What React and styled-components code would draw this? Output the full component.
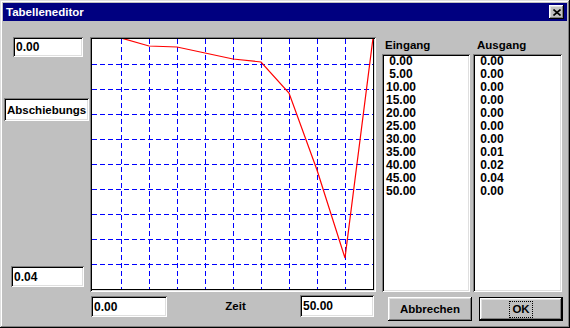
import React from "react";
import styled, { createGlobalStyle } from "styled-components";

const GlobalStyle = createGlobalStyle`
  html, body { margin: 0; padding: 0; background: #c0c0c0; }
  body { font-family: "Liberation Sans", Arial, sans-serif; }
  * { box-sizing: border-box; }
`;

const sunken = `
  box-shadow: inset 1px 1px #808080, inset -1px -1px #ffffff,
    inset 2px 2px #000000, inset -2px -2px #dfdfdf;
`;

const Window = styled.div`
  width: 570px;
  height: 328px;
  padding: 3px;
  background: #c0c0c0;
  display: flex;
  flex-direction: column;
  box-shadow: inset -1px -1px #000000, inset 1px 1px #dfdfdf,
    inset -2px -2px #808080, inset 2px 2px #ffffff;
  font-family: "Liberation Sans", Arial, sans-serif;
  color: #000;
  overflow: hidden;
`;

const TitleBar = styled.div`
  height: 18px;
  background: #000080;
  display: flex;
  align-items: center;
  justify-content: space-between;
  padding: 0 3px 0 3px;
`;

const TitleText = styled.span`
  color: #ffffff;
  font-weight: bold;
  font-size: 11.5px;
  line-height: 14px;
`;

const CloseButton = styled.div`
  width: 15px;
  height: 14px;
  background: #c0c0c0;
  display: flex;
  align-items: center;
  justify-content: center;
  box-shadow: inset -1px -1px #000000, inset 1px 1px #ffffff,
    inset -2px -2px #808080, inset 2px 2px #dfdfdf;
`;

const Body = styled.div`
  flex: 1;
  display: flex;
`;

const LeftPanel = styled.div`
  width: 87px;
  display: flex;
  flex-direction: column;
`;

const Field = styled.div`
  width: ${(p) => p.$w}px;
  height: ${(p) => p.$h}px;
  margin: ${(p) => p.$m || "0"};
  background: #ffffff;
  ${sunken}
  display: flex;
  align-items: center;
  padding: 0 3px;
  font-weight: bold;
  font-size: ${(p) => p.$fs || 12}px;
  line-height: 14px;
  white-space: pre;
  overflow: hidden;
`;

const CenterPanel = styled.div`
  width: 286px;
  display: flex;
  flex-direction: column;
`;

const PlotFrame = styled.div`
  margin-top: 16px;
  width: 286px;
  height: 255px;
  padding: 2px;
  background: #ffffff;
  ${sunken}
`;

const ChartSvg = styled.svg`
  display: block;
`;

const BottomRow = styled.div`
  margin-top: 3px;
  height: 22px;
  display: flex;
  align-items: flex-end;
  justify-content: space-between;
`;

const AxisLabel = styled.span`
  font-weight: bold;
  font-size: 11.5px;
  line-height: 14px;
  align-self: center;
  margin-left: 4px;
`;

const RightPanel = styled.div`
  flex: 1;
  padding-left: 6px;
  display: flex;
  flex-direction: column;
`;

const ListsRow = styled.div`
  display: flex;
  gap: 3px;
`;

const ListColumn = styled.div`
  width: ${(p) => p.$w}px;
  display: flex;
  flex-direction: column;
`;

const ColumnLabel = styled.div`
  height: 33px;
  padding-top: 17px;
  padding-left: ${(p) => p.$indent}px;
  font-weight: bold;
  font-size: 11.5px;
  line-height: 14px;
`;

const ListBox = styled.div`
  height: 238px;
  background: #ffffff;
  ${sunken}
  padding: 1px 2px 2px 4px;
`;

const ListItem = styled.div`
  font-weight: bold;
  font-size: 12px;
  line-height: 13px;
  height: 13px;
  white-space: pre;
`;

const ButtonRow = styled.div`
  margin-top: 5px;
  margin-left: 6px;
  display: flex;
  gap: 7px;
`;

const Button = styled.div`
  width: 84px;
  height: 24px;
  display: flex;
  align-items: center;
  justify-content: center;
  font-weight: bold;
  font-size: 11.5px;
  line-height: 13px;
  background: #c0c0c0;
  box-shadow: ${(p) =>
    p.$default
      ? "inset 0 0 0 1px #000000, inset -2px -2px #000000, inset 2px 2px #ffffff, inset -3px -3px #808080, inset 3px 3px #dfdfdf"
      : "inset -1px -1px #000000, inset 1px 1px #ffffff, inset -2px -2px #808080, inset 2px 2px #dfdfdf"};
`;

const FocusRect = styled.span`
  outline: 1px dotted #000000;
  outline-offset: 0;
  padding: 1px 2px;
  line-height: 13px;
`;

const eingang = [" 0.00", " 5.00", "10.00", "15.00", "20.00", "25.00", "30.00", "35.00", "40.00", "45.00", "50.00"];
const ausgang = [" 0.00", " 0.00", " 0.00", " 0.00", " 0.00", " 0.00", " 0.00", " 0.01", " 0.02", " 0.04", " 0.00"];

const curve = [
  [29, -1],
  [57, 7],
  [85, 8],
  [113, 14],
  [141, 20],
  [169, 23],
  [197, 54],
  [225, 131],
  [253, 219],
  [281, -1],
];

function Chart() {
  const vx = [];
  for (let k = 0; k < 9; k++) vx.push(29 + 28 * k + 0.5);
  const hy = [];
  for (let k = 0; k < 9; k++) hy.push(25 + 25 * k + 0.5);
  return (
    <ChartSvg width="282" height="251" viewBox="0 0 282 251">
      {hy.map((y) => (
        <line key={"h" + y} x1="0" y1={y} x2="281" y2={y} stroke="#0000ff" strokeWidth="1" strokeDasharray="5 3" shapeRendering="crispEdges" />
      ))}
      {vx.map((x) => (
        <line key={"v" + x} x1={x} y1="0" x2={x} y2="250" stroke="#0000ff" strokeWidth="1" strokeDasharray="5 3" shapeRendering="crispEdges" />
      ))}
      <line x1="0" y1="250.5" x2="282" y2="250.5" stroke="#000" strokeWidth="1" />
      <line x1="281.5" y1="0" x2="281.5" y2="251" stroke="#000" strokeWidth="1" />
      <polyline
        points={curve.map((p) => p.join(",")).join(" ")}
        fill="none"
        stroke="#ff0000"
        strokeWidth="1.2"
      />
    </ChartSvg>
  );
}

export default function App() {
  return (
    <>
      <GlobalStyle />
      <Window>
        <TitleBar>
          <TitleText>Tabelleneditor</TitleText>
          <CloseButton>
            <svg width="8" height="7" viewBox="0 0 8 7">
              <path d="M0.5 0.5 L7.5 6.5 M7.5 0.5 L0.5 6.5" stroke="#000" strokeWidth="1.6" fill="none" />
            </svg>
          </CloseButton>
        </TitleBar>
        <Body>
          <LeftPanel>
            <Field $w={70} $h={20} $m="16px 0 0 10px">0.00</Field>
            <Field $w={85} $h={23} $m="41px 0 0 1px" $fs={11.5}>Abschiebungs</Field>
            <Field $w={73} $h={21} $m="145px 0 0 8px">0.04</Field>
          </LeftPanel>
          <CenterPanel>
            <PlotFrame>
              <Chart />
            </PlotFrame>
            <BottomRow>
              <Field $w={76} $h={21} $m="0 0 0 1px">0.00</Field>
              <AxisLabel>Zeit</AxisLabel>
              <Field $w={74} $h={22} $m="0 2px 0 0">50.00</Field>
            </BottomRow>
          </CenterPanel>
          <RightPanel>
            <ListsRow>
              <ListColumn $w={88}>
                <ColumnLabel $indent={3}>Eingang</ColumnLabel>
                <ListBox>
                  {eingang.map((v, i) => (
                    <ListItem key={i}>{v}</ListItem>
                  ))}
                </ListBox>
              </ListColumn>
              <ListColumn $w={89}>
                <ColumnLabel $indent={4}>Ausgang</ColumnLabel>
                <ListBox>
                  {ausgang.map((v, i) => (
                    <ListItem key={i}>{v}</ListItem>
                  ))}
                </ListBox>
              </ListColumn>
            </ListsRow>
            <ButtonRow>
              <Button>Abbrechen</Button>
              <Button $default>
                <FocusRect>OK</FocusRect>
              </Button>
            </ButtonRow>
          </RightPanel>
        </Body>
      </Window>
    </>
  );
}
